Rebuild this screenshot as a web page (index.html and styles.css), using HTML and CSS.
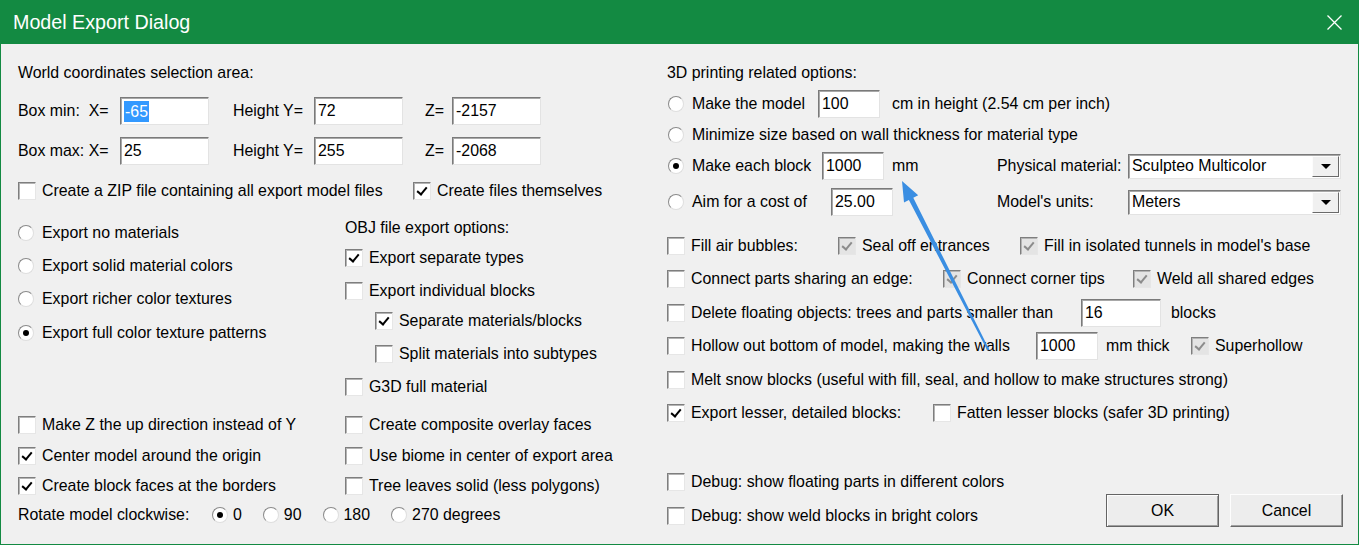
FILE: index.html
```html
<!DOCTYPE html>
<html>
<head>
<meta charset="utf-8">
<title>Model Export Dialog</title>
<link rel="stylesheet" href="styles.css">
</head>
<body>
<div class="dlg">
  <div class="titlebar">
    <span class="title">Model Export Dialog</span>
    <svg class="close" width="15" height="15" viewBox="0 0 15 15"><path d="M0.5 0.5 L14.5 14.5 M14.5 0.5 L0.5 14.5" stroke="#fff" stroke-width="1.3" fill="none"/></svg>
  </div>
  <div class="body">
    <div class="left">
      <div class="hdr">World coordinates selection area:</div>
      <div class="coords">
        <span class="clab">Box min:&nbsp; X=</span>
        <span class="field"><span class="hl">-65</span></span>
        <span class="clab hy">Height Y=</span>
        <span class="field">72</span>
        <span class="clab cz">Z=</span>
        <span class="field">-2157</span>
      </div>
      <div class="coords">
        <span class="clab">Box max: X=</span>
        <span class="field">25</span>
        <span class="clab hy">Height Y=</span>
        <span class="field">255</span>
        <span class="clab cz">Z=</span>
        <span class="field">-2068</span>
      </div>
      <div class="row zip">
        <label class="chk c-zip"><span class="box"></span>Create a ZIP file containing all export model files</label>
        <label class="chk"><span class="box on"></span>Create files themselves</label>
      </div>
      <div class="split">
        <div class="col-a">
          <div class="row ra1"><span class="rad"></span>Export no materials</div>
          <div class="row ra2"><span class="rad"></span>Export solid material colors</div>
          <div class="row ra3"><span class="rad"></span>Export richer color textures</div>
          <div class="row ra4"><span class="rad on"></span>Export full color texture patterns</div>
        </div>
        <div class="col-b">
          <div class="row ob0">OBJ file export options:</div>
          <div class="row ob1"><span class="box on"></span>Export separate types</div>
          <div class="row ob2"><span class="box"></span>Export individual blocks</div>
          <div class="row ob3 ind"><span class="box on"></span>Separate materials/blocks</div>
          <div class="row ob4 ind"><span class="box"></span>Split materials into subtypes</div>
          <div class="row ob5"><span class="box"></span>G3D full material</div>
        </div>
      </div>
      <div class="lower">
        <div class="row"><span class="box"></span>Make Z the up direction instead of Y</div>
        <div class="row"><span class="box"></span>Create composite overlay faces</div>
        <div class="row"><span class="box on"></span>Center model around the origin</div>
        <div class="row"><span class="box"></span>Use biome in center of export area</div>
        <div class="row"><span class="box on"></span>Create block faces at the borders</div>
        <div class="row"><span class="box"></span>Tree leaves solid (less polygons)</div>
      </div>
      <div class="row rot">
        <span class="rot-lab">Rotate model clockwise:</span>
        <span class="rad on"></span><span class="rv">0</span>
        <span class="rad sp"></span><span class="rv">90</span>
        <span class="rad sp"></span><span class="rv">180</span>
        <span class="rad sp"></span><span class="rv">270 degrees</span>
      </div>
    </div>

    <div class="right">
      <div class="hdr">3D printing related options:</div>
      <div class="rrow r1">
        <span class="opt w-model"><span class="rad"></span>Make the model</span>
        <span class="field tf">100</span>
        <span class="after-cm">cm in height (2.54 cm per inch)</span>
      </div>
      <div class="rrow r2">
        <span class="opt"><span class="rad"></span>Minimize size based on wall thickness for material type</span>
      </div>
      <div class="rrow r3">
        <span class="rl">
          <span class="opt w-block"><span class="rad on"></span>Make each block</span>
          <span class="field tf">1000</span>
          <span class="after-mm">mm</span>
        </span>
        <span class="plab">Physical material:</span>
        <span class="sel">Sculpteo Multicolor<span class="dd"></span></span>
      </div>
      <div class="rrow r4">
        <span class="rl">
          <span class="opt w-cost"><span class="rad"></span>Aim for a cost of</span>
          <span class="field tf">25.00</span>
        </span>
        <span class="plab">Model's units:</span>
        <span class="sel">Meters<span class="dd"></span></span>
      </div>

      <div class="row k-fill">
        <span class="chk c-fill"><span class="box"></span>Fill air bubbles:</span>
        <span class="chk c-seal"><span class="box on dis"></span>Seal off entrances</span>
        <span class="chk"><span class="box on dis"></span>Fill in isolated tunnels in model's base</span>
      </div>
      <div class="row k-conn">
        <span class="chk c-conn"><span class="box"></span>Connect parts sharing an edge:</span>
        <span class="chk c-tips"><span class="box on dis"></span>Connect corner tips</span>
        <span class="chk"><span class="box on dis"></span>Weld all shared edges</span>
      </div>
      <div class="rrow k-del">
        <span class="chk c-del"><span class="box"></span>Delete floating objects: trees and parts smaller than</span>
        <span class="field tf wide">16</span>
        <span class="after-blocks">blocks</span>
      </div>
      <div class="rrow k-hol">
        <span class="chk c-hol"><span class="box"></span>Hollow out bottom of model, making the walls</span>
        <span class="field tf">1000</span>
        <span class="after-thick">mm thick</span>
        <span class="chk"><span class="box on dis"></span>Superhollow</span>
      </div>
      <div class="row k-melt">
        <span class="chk"><span class="box"></span>Melt snow blocks (useful with fill, seal, and hollow to make structures strong)</span>
      </div>
      <div class="row k-less">
        <span class="chk c-less"><span class="box on"></span>Export lesser, detailed blocks:</span>
        <span class="chk"><span class="box"></span>Fatten lesser blocks (safer 3D printing)</span>
      </div>

      <div class="bottom">
        <div class="dbg">
          <div class="row"><span class="box"></span>Debug: show floating parts in different colors</div>
          <div class="row d2"><span class="box"></span>Debug: show weld blocks in bright colors</div>
        </div>
        <div class="btns">
          <button class="btn def">OK</button>
          <button class="btn">Cancel</button>
        </div>
      </div>
    </div>
  </div>
</div>
<svg class="arrow" width="1359" height="545" viewBox="0 0 1359 545">
  <polygon fill="#3a8ee2" points="902,181 918.2,195.2 913.3,197.7 989.2,349.5 987.4,350.5 908.9,199.9 904,202.4"/>
</svg>
</body>
</html>
```

FILE: styles.css
```css
* { box-sizing: border-box; margin: 0; padding: 0; }
html, body { width: 1359px; height: 545px; overflow: hidden; background: #f0f0f0; }
body {
  font-family: "Liberation Sans", Arial, sans-serif;
  font-size: 15.9px;
  color: #000;
  position: relative;
}

.dlg {
  width: 1359px;
  height: 545px;
  border: 1px solid #138a42;
  border-top: 0;
  background: #f0f0f0;
  display: flex;
  flex-direction: column;
}

.titlebar {
  height: 44px;
  flex: none;
  background: #138a42;
  display: flex;
  align-items: center;
  justify-content: space-between;
  padding: 0 16px 0 12px;
}
.title { color: #fff; font-size: 19.7px; }
.close { display: block; }

.body { display: flex; flex: 1; }
.left { width: 666px; flex: none; padding: 17px 0 0 17px; }
.right { flex: 1; padding: 17px 15px 0 0; }

.hdr { height: 24px; line-height: 24px; white-space: nowrap; }
.row { display: flex; align-items: center; height: 24px; white-space: nowrap; }
.rrow { display: flex; align-items: center; height: 28px; white-space: nowrap; }

/* checkbox */
.box {
  flex: none;
  width: 18px;
  height: 18px;
  background: #fff;
  border: 1px solid;
  border-color: #7e7e7e #e6e6e6 #e6e6e6 #7e7e7e;
  box-shadow: inset 1px 1px 0 #b4b4b4;
  margin-right: 6px;
  position: relative;
}
.box.on::after {
  content: "";
  position: absolute;
  left: 5px;
  top: 2px;
  width: 4px;
  height: 8px;
  border: solid #000;
  border-width: 0 2.5px 2.5px 0;
  transform: rotate(40deg);
}
.box.dis { background: #e4e4e4; }
.box.dis::after { border-color: #8c8c8c; }

/* radio */
.rad {
  flex: none;
  width: 16px;
  height: 16px;
  border-radius: 50%;
  background: #fff;
  border: 1px solid;
  border-color: #8a8a8a #dedede #dedede #8a8a8a;
  margin-right: 8px;
  position: relative;
}
.rad.on::after {
  content: "";
  position: absolute;
  left: 4px;
  top: 4px;
  width: 6px;
  height: 6px;
  border-radius: 50%;
  background: #000;
}

.chk { display: flex; align-items: center; white-space: nowrap; }
.opt { display: flex; align-items: center; white-space: nowrap; padding-left: 1px; }

/* text fields */
.field {
  flex: none;
  height: 28px;
  width: 89px;
  background: #fff;
  border: 1px solid;
  border-color: #7a7a7a #e3e3e3 #e3e3e3 #7a7a7a;
  box-shadow: inset 1px 1px 0 #a8a8a8;
  padding-left: 3px;
  display: flex;
  align-items: center;
}
.hl { background: #3399ff; color: #fff; line-height: 21px; padding: 0 1px; }
.tf { width: 62px; }
.tf.wide { width: 80px; }

/* coordinates */
.coords { display: flex; align-items: center; height: 28px; margin-top: 12px; }
.clab { flex: none; width: 102px; white-space: nowrap; }
.clab.hy { width: 105px; padding-left: 24px; }
.clab.cz { width: 49px; padding-left: 22px; }

.zip { margin-top: 14px; }
.c-zip { width: 395px; }

/* upper split */
.split { display: flex; height: 195px; margin-top: 1px; }
.col-a { width: 327px; flex: none; }
.col-b { flex: 1; }
.ra1 { margin-top: 17px; }
.ra2 { margin-top: 9px; }
.ra3 { margin-top: 9px; }
.ra4 { margin-top: 10px; }
.ob0 { margin-top: 12px; }
.ob1 { margin-top: 6px; }
.ob2 { margin-top: 9px; }
.ob3 { margin-top: 6px; }
.ob4 { margin-top: 9px; }
.ob5 { margin-top: 9px; }
.ind { padding-left: 30px; }

.lower {
  display: grid;
  grid-template-columns: 327px 1fr;
  grid-auto-rows: 24px;
  row-gap: 6.5px;
  margin-top: 14px;
}

.rot { margin-top: 5px; }
.rot-lab { width: 194px; flex: none; }
.rot .rad { margin-right: 5px; }
.rot .rad.sp { margin-left: 21px; }

/* right side */
.r1 { margin-top: 5px; }
.r2 { margin-top: 3px; }
.r3 { margin-top: 3px; }
.r4 { margin-top: 8px; }
.w-model { width: 151px; flex: none; }
.w-block { width: 155px; flex: none; }
.w-cost { width: 164px; flex: none; }
.after-cm { margin-left: 12px; }
.after-mm { margin-left: 8px; }
.rl { display: flex; align-items: center; width: 330px; flex: none; height: 28px; }
.plab { width: 131px; flex: none; }

.sel {
  width: 213px;
  height: 25px;
  background: #fff;
  border: 1px solid;
  border-color: #7a7a7a #e3e3e3 #e3e3e3 #7a7a7a;
  box-shadow: inset 1px 1px 0 #a8a8a8;
  padding-left: 3px;
  display: flex;
  align-items: center;
}
.dd {
  margin-left: auto;
  width: 27px;
  height: 21px;
  margin-right: 1px;
  background: #f0f0f0;
  border: 1px solid;
  border-color: #fcfcfc #6a6a6a #6a6a6a #fcfcfc;
  display: flex;
  align-items: center;
  justify-content: center;
}
.dd::after {
  content: "";
  border-left: 5px solid transparent;
  border-right: 5px solid transparent;
  border-top: 5px solid #000;
}

.k-fill { margin-top: 18px; }
.k-conn { margin-top: 9px; }
.k-del { margin-top: 8px; }
.k-hol { margin-top: 5px; }
.k-melt { margin-top: 8px; }
.k-less { margin-top: 9px; }
.c-fill { width: 171px; flex: none; }
.c-seal { width: 182px; flex: none; }
.c-conn { width: 276px; flex: none; }
.c-tips { width: 190px; flex: none; }
.c-del { width: 414px; flex: none; }
.c-hol { width: 369px; flex: none; }
.c-less { width: 266px; flex: none; }
.after-blocks { margin-left: 10px; }
.after-thick { margin-left: 8px; width: 85px; flex: none; }

.bottom { display: flex; margin-top: 45px; }
.dbg .d2 { margin-top: 10px; }
.btns { margin-left: auto; margin-top: 24px; display: flex; gap: 11px; align-self: flex-start; }
.btn {
  width: 113px;
  height: 33px;
  font: inherit;
  color: #000;
  background: #ededed;
  border: 1px solid;
  border-color: #fdfdfd #6a6a6a #6a6a6a #fdfdfd;
  box-shadow: inset -1px -1px 0 #a0a0a0;
}
.btn.def {
  border-color: #646464;
  box-shadow: inset 1px 1px 0 #fdfdfd, inset -1px -1px 0 #a0a0a0;
}

.arrow { position: absolute; left: 0; top: 0; pointer-events: none; }
```
